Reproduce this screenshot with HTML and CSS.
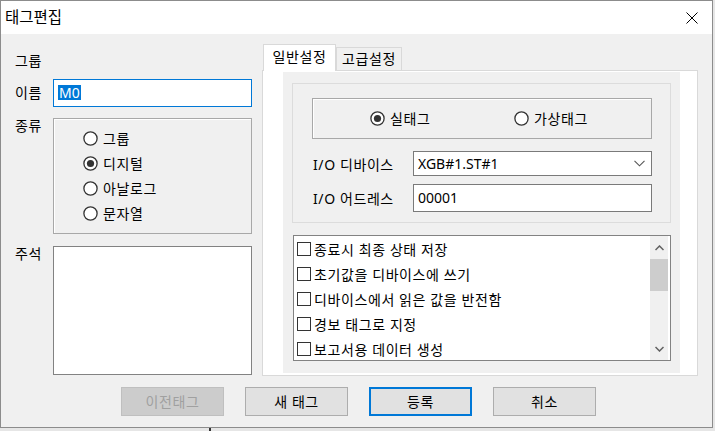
FILE: index.html
```html
<!DOCTYPE html>
<html lang="ko">
<head>
    <meta charset="UTF-8">
    <meta name="viewport" content="width=device-width, initial-scale=1.0">
    <title>태그편집</title>
    <link rel="stylesheet" href="styles.css">
</head>
<body>
    <div class="window">
        <div class="title_bar">
            <div class="title">태그편집</div>
            <svg class="close" width="12" height="12" viewBox="0 0 12 12">
                <path d="M0.5 0.5 L11.5 11.5 M11.5 0.5 L0.5 11.5" stroke="#000" stroke-width="1" fill="none"/>
            </svg>
        </div>
        <div class="content">
            <div class="main">
                <div class="left">
                    <div class="row row_group"><div class="label">그룹</div></div>
                    <div class="row row_name">
                        <div class="label">이름</div>
                        <div class="text_input focused"><span class="selected">M0</span></div>
                    </div>
                    <div class="row row_kind">
                        <div class="label">종류</div>
                        <div class="group_box kind_box">
                            <div class="radio">
                                <svg class="radio_mark" width="15" height="15" viewBox="0 0 15 15"><circle cx="7.5" cy="7.5" r="6.6" fill="#fff" stroke="#333" stroke-width="1.3"/></svg>
                                그룹
                            </div>
                            <div class="radio">
                                <svg class="radio_mark" width="15" height="15" viewBox="0 0 15 15"><circle cx="7.5" cy="7.5" r="6.6" fill="#fff" stroke="#333" stroke-width="1.3"/><circle cx="7.5" cy="7.5" r="3.6" fill="#333"/></svg>
                                디지털
                            </div>
                            <div class="radio">
                                <svg class="radio_mark" width="15" height="15" viewBox="0 0 15 15"><circle cx="7.5" cy="7.5" r="6.6" fill="#fff" stroke="#333" stroke-width="1.3"/></svg>
                                아날로그
                            </div>
                            <div class="radio">
                                <svg class="radio_mark" width="15" height="15" viewBox="0 0 15 15"><circle cx="7.5" cy="7.5" r="6.6" fill="#fff" stroke="#333" stroke-width="1.3"/></svg>
                                문자열
                            </div>
                        </div>
                    </div>
                    <div class="row row_memo">
                        <div class="label">주석</div>
                        <div class="memo"></div>
                    </div>
                </div>
                <div class="right">
                    <div class="tabs">
                        <div class="tab active">일반설정</div>
                        <div class="tab">고급설정</div>
                    </div>
                    <div class="tab_page">
                        <div class="sub_panel">
                            <div class="setting_box">
                                <div class="group_box type_box">
                                    <div class="radio radio_real">
                                        <svg class="radio_mark" width="15" height="15" viewBox="0 0 15 15"><circle cx="7.5" cy="7.5" r="6.6" fill="#fff" stroke="#333" stroke-width="1.3"/><circle cx="7.5" cy="7.5" r="3.6" fill="#333"/></svg>
                                        실태그
                                    </div>
                                    <div class="radio">
                                        <svg class="radio_mark" width="15" height="15" viewBox="0 0 15 15"><circle cx="7.5" cy="7.5" r="6.6" fill="#fff" stroke="#333" stroke-width="1.3"/></svg>
                                        가상태그
                                    </div>
                                </div>
                                <div class="field field_device">
                                    <div class="field_label">I/O 디바이스</div>
                                    <div class="combo">
                                        <span>XGB#1.ST#1</span>
                                        <svg class="chevron" width="11" height="7" viewBox="0 0 11 7"><path d="M0.5 0.8 L5.5 5.8 L10.5 0.8" stroke="#555" stroke-width="1.1" fill="none"/></svg>
                                    </div>
                                </div>
                                <div class="field field_address">
                                    <div class="field_label">I/O 어드레스</div>
                                    <div class="text_input">00001</div>
                                </div>
                            </div>
                            <div class="list_box">
                                <div class="list_items">
                                    <div class="list_item"><span class="check"></span>종료시 최종 상태 저장</div>
                                    <div class="list_item"><span class="check"></span>초기값을 디바이스에 쓰기</div>
                                    <div class="list_item"><span class="check"></span>디바이스에서 읽은 값을 반전함</div>
                                    <div class="list_item"><span class="check"></span>경보 태그로 지정</div>
                                    <div class="list_item"><span class="check"></span>보고서용 데이터 생성</div>
                                </div>
                                <div class="scrollbar">
                                    <div class="scroll_button">
                                        <svg width="9" height="6" viewBox="0 0 9 6"><path d="M0.5 5 L4.5 1 L8.5 5" stroke="#606060" stroke-width="1.5" fill="none"/></svg>
                                    </div>
                                    <div class="scroll_thumb"></div>
                                    <div class="scroll_track"></div>
                                    <div class="scroll_button">
                                        <svg width="9" height="6" viewBox="0 0 9 6"><path d="M0.5 1 L4.5 5 L8.5 1" stroke="#606060" stroke-width="1.5" fill="none"/></svg>
                                    </div>
                                </div>
                            </div>
                        </div>
                    </div>
                </div>
            </div>
            <div class="buttons">
                <div class="button disabled">이전태그</div>
                <div class="button">새 태그</div>
                <div class="button default">등록</div>
                <div class="button">취소</div>
            </div>
        </div>
    </div>
    <div class="under"><div class="tick"></div></div>
</body>
</html>
```

FILE: styles.css
```css
body
{
    margin: 0;
    width: 715px;
    height: 431px;
    overflow: hidden;
    background-color: #e6e6e6;
    font-family: "Noto Sans", "Noto Sans CJK KR", sans-serif;
    font-size: 14px;
    color: #000;
}
.window
{
    width: 713px;
    height: 428px;
    box-sizing: border-box;
    border: 1px solid #8c8c8c;
    display: flex;
    flex-direction: column;
}
.title_bar
{
    height: 33px;
    background-color: #fff;
    display: flex;
    align-items: center;
    justify-content: space-between;
}
.title
{
    padding-left: 4px;
    font-size: 15.5px;
    line-height: 33px;
}
.close
{
    margin-right: 14px;
}
.content
{
    flex: 1;
    background-color: #f0f0f0;
    display: flex;
    flex-direction: column;
}
.main
{
    display: flex;
}
/* hangul in the dialog font sits a little wider */
.label,
.radio,
.tab,
.field_label,
.list_item,
.button
{
    letter-spacing: 0.6px;
}

/* left column */
.left
{
    width: 261px;
    padding-left: 14px;
    box-sizing: border-box;
}
.row
{
    display: flex;
}
.label
{
    width: 38px;
    flex-shrink: 0;
    line-height: 16px;
    white-space: nowrap;
}
.row_group
{
    margin-top: 19px;
}
.row_name
{
    margin-top: 10px;
    align-items: center;
}
.row_kind
{
    margin-top: 11px;
}
.row_memo
{
    margin-top: 12px;
}
.text_input
{
    height: 28px;
    box-sizing: border-box;
    border: 1px solid #7a7a7a;
    background-color: #fff;
    padding-left: 4px;
    line-height: 26px;
}
.row_name .text_input
{
    width: 199px;
}
.focused
{
    border-color: #0078d7;
}
.selected
{
    background-color: #0078d7;
    color: #fff;
    line-height: 15px;
    display: inline-block;
    padding: 0 1px;
}
.group_box
{
    box-sizing: border-box;
    border: 1px solid #a8a8a8;
    box-shadow: inset 1px 1px 0 #fff;
}
.kind_box
{
    width: 199px;
    height: 116px;
    padding: 7px 0 0 29px;
}
.radio
{
    display: flex;
    align-items: center;
    height: 25px;
    line-height: 16px;
}
.radio_mark
{
    margin-right: 5px;
    flex-shrink: 0;
}
.memo
{
    width: 199px;
    height: 129px;
    box-sizing: border-box;
    border: 1px solid #828282;
    background-color: #fff;
}

/* right column */
.right
{
    width: 436px;
    padding-top: 10px;
}
.tabs
{
    display: flex;
    align-items: flex-end;
    height: 26px;
    padding-left: 1px;
}
.tab
{
    height: 23px;
    box-sizing: border-box;
    border: 1px solid #d9d9d9;
    border-bottom: none;
    background-color: #f0f0f0;
    line-height: 22px;
    text-align: center;
    width: 66px;
}
.tab.active
{
    width: 73px;
    height: 27px;
    margin-bottom: -1px;
    background-color: #fff;
    position: relative;
    z-index: 1;
    line-height: 24px;
}
.tab_page
{
    height: 306px;
    box-sizing: border-box;
    border: 1px solid #d9d9d9;
    background-color: #fff;
    padding: 1px 17px 2px 20px;
}
.sub_panel
{
    height: 100%;
    background-color: #f0f0f0;
    padding: 11px 9px 0 9px;
    box-sizing: border-box;
}
.setting_box
{
    height: 140px;
    box-sizing: border-box;
    border: 1px solid #dcdcdc;
    padding: 14px 18px 0 19px;
}
.type_box
{
    height: 41px;
    display: flex;
    padding-left: 57px;
}
.radio_real
{
    width: 144px;
}
.type_box .radio
{
    height: 39px;
}
.field
{
    display: flex;
    align-items: center;
}
.field_device
{
    margin-top: 12px;
}
.field_address
{
    margin-top: 8px;
}
.field_label
{
    width: 101px;
    padding-left: 1px;
    box-sizing: border-box;
    white-space: nowrap;
}
.combo
{
    width: 239px;
    height: 25px;
    box-sizing: border-box;
    border: 1px solid #7a7a7a;
    background-color: #fff;
    display: flex;
    align-items: center;
    justify-content: space-between;
    padding: 0 6px 0 4px;
}
.field_address .text_input
{
    width: 239px;
}
.list_box
{
    margin: 12px 0 0 1px;
    height: 126px;
    box-sizing: border-box;
    border: 1px solid #828282;
    background-color: #fff;
    display: flex;
}
.list_items
{
    flex: 1;
}
.list_item
{
    height: 25px;
    display: flex;
    align-items: center;
    padding-left: 3px;
    white-space: nowrap;
}
.check
{
    width: 14px;
    height: 14px;
    box-sizing: border-box;
    border: 1px solid #333;
    background-color: #fff;
    margin-right: 3px;
    flex-shrink: 0;
}
.scrollbar
{
    width: 18px;
    margin-right: 2px;
    background-color: #f0f0f0;
    display: flex;
    flex-direction: column;
}
.scroll_button
{
    height: 23px;
    display: flex;
    align-items: center;
    justify-content: center;
}
.scroll_thumb
{
    height: 32px;
    background-color: #cdcdcd;
}
.scroll_track
{
    flex: 1;
}

/* bottom buttons */
.buttons
{
    margin-top: 11px;
    display: flex;
    justify-content: center;
    gap: 21px;
    padding-left: 4px;
}
.button
{
    width: 103px;
    height: 29px;
    box-sizing: border-box;
    border: 1px solid #adadad;
    background-color: #e1e1e1;
    text-align: center;
    line-height: 27px;
}
.button.disabled
{
    background-color: #cccccc;
    border-color: #bfbfbf;
    color: #a0a0a0;
}
.button.default
{
    border: 2px solid #0078d7;
    line-height: 25px;
}
.under
{
    height: 3px;
    display: flex;
}
.tick
{
    width: 2px;
    margin-left: 209px;
    background-color: #333;
}
```
